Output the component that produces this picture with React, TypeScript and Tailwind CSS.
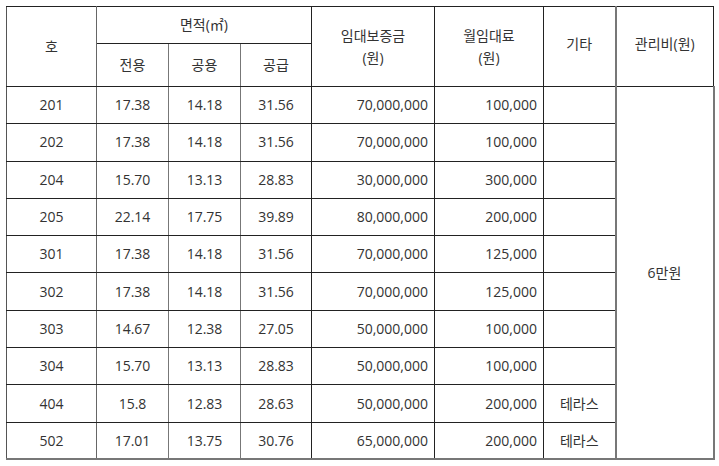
import React from 'react'

const rows = [
  ['201', '17.38', '14.18', '31.56', '70,000,000', '100,000', ''],
  ['202', '17.38', '14.18', '31.56', '70,000,000', '100,000', ''],
  ['204', '15.70', '13.13', '28.83', '30,000,000', '300,000', ''],
  ['205', '22.14', '17.75', '39.89', '80,000,000', '200,000', ''],
  ['301', '17.38', '14.18', '31.56', '70,000,000', '125,000', ''],
  ['302', '17.38', '14.18', '31.56', '70,000,000', '125,000', ''],
  ['303', '14.67', '12.38', '27.05', '50,000,000', '100,000', ''],
  ['304', '15.70', '13.13', '28.83', '50,000,000', '100,000', ''],
  ['404', '15.8', '12.83', '28.63', '50,000,000', '200,000', '테라스'],
  ['502', '17.01', '13.75', '30.76', '65,000,000', '200,000', '테라스'],
]

const font = "font-['Open_Sans','Noto_Sans_CJK_KR',sans-serif]"
const cell = 'border border-[#222] p-0 font-normal'

export default function App() {
  return (
    <div className="bg-white w-[719px] h-[466px] pt-[6px] pl-[6px]">
      <table className={`${font} table-fixed border-collapse w-[707px] text-[14px] text-[#333] leading-[22px]`}>
        <colgroup>
          <col className="w-[90px]" />
          <col className="w-[72px]" />
          <col className="w-[72px]" />
          <col className="w-[71px]" />
          <col className="w-[123px]" />
          <col className="w-[109px]" />
          <col className="w-[72px]" />
          <col className="w-[98px]" />
        </colgroup>
        <thead>
          <tr className="h-[37px]">
            <th rowSpan={2} className={`${cell} border-l-[#555] border-r-[#666]`}>호</th>
            <th colSpan={3} className={cell}>면적(㎡)</th>
            <th rowSpan={2} className={cell}>
              임대보증금
              <br />
              (원)
            </th>
            <th rowSpan={2} className={cell}>
              월임대료
              <br />
              (원)
            </th>
            <th rowSpan={2} className={`${cell} pb-[6px]`}>기타</th>
            <th rowSpan={2} className={`${cell} border-l-2 border-l-[#777] pb-[6px]`}>관리비(원)</th>
          </tr>
          <tr className="h-[43px]">
            <th className={`${cell} border-r-[#777]`}>전용</th>
            <th className={`${cell} border-r-[#777]`}>공용</th>
            <th className={cell}>공급</th>
          </tr>
        </thead>
        <tbody>
          {rows.map((r, i) => (
            <tr key={r[0]} className="h-[37.3px]">
              <td className={`${cell} text-center border-l-[#555] border-r-[#666] ${i === 9 ? 'border-b-2 border-b-[#777]' : ''}`}>{r[0]}</td>
              <td className={`${cell} text-center border-r-[#777] ${i === 9 ? 'border-b-2 border-b-[#777]' : ''}`}>{r[1]}</td>
              <td className={`${cell} text-center border-r-[#777] ${i === 9 ? 'border-b-2 border-b-[#777]' : ''}`}>{r[2]}</td>
              <td className={`${cell} text-center ${i === 9 ? 'border-b-2 border-b-[#777]' : ''}`}>{r[3]}</td>
              <td className={`${cell} text-right pr-[6px] ${i === 9 ? 'border-b-2 border-b-[#777]' : ''}`}>{r[4]}</td>
              <td className={`${cell} text-right pr-[6px] ${i === 9 ? 'border-b-2 border-b-[#777]' : ''}`}>{r[5]}</td>
              <td className={`${cell} text-center ${i === 9 ? 'border-b-2 border-b-[#777]' : ''}`}>{r[6]}</td>
              {i === 0 && (
                <td rowSpan={10} className={`${cell} text-center border-l-2 border-l-[#777] border-r-2 border-r-[#777] border-b-2 border-b-[#777]`}>
                  6만원
                </td>
              )}
            </tr>
          ))}
        </tbody>
      </table>
    </div>
  )
}
